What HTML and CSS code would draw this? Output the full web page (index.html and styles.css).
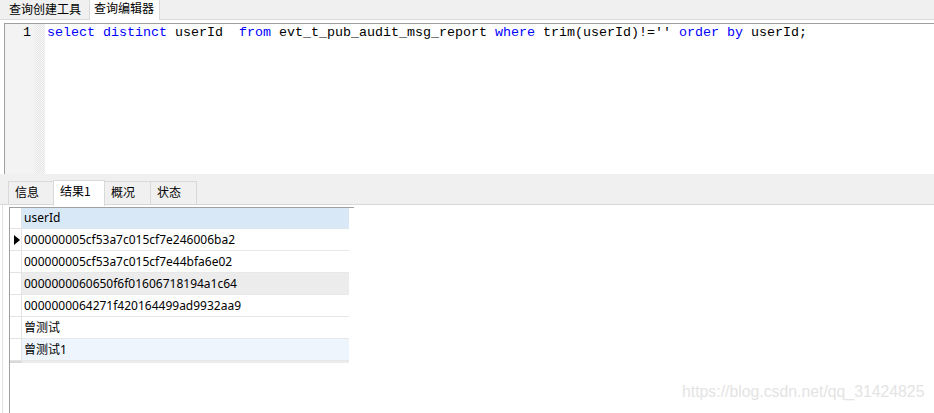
FILE: index.html
```html
<!DOCTYPE html>
<html>
<head>
<meta charset="utf-8">
<link rel="stylesheet" href="styles.css">
</head>
<body>
<div class="app">
  <div class="topbar">
    <div class="ttab">查询创建工具</div>
    <div class="ttab active">查询编辑器</div>
  </div>
  <div class="gap"></div>
  <div class="editor">
    <div class="gutter"><span class="lineno">1</span></div>
    <div class="fold"></div>
    <div class="code"><span class="kw">select</span> <span class="kw">distinct</span> userId  <span class="kw">from</span> evt_t_pub_audit_msg_report <span class="kw">where</span> trim(userId)!='' <span class="kw">order</span> <span class="kw">by</span> userId;</div>
  </div>
  <div class="midbar">
    <div class="rtab">信息</div>
    <div class="rtab active">结果1</div>
    <div class="rtab">概况</div>
    <div class="rtab">状态</div>
  </div>
  <div class="results">
    <div class="grid">
      <div class="row head"><div class="ind"></div><div class="cell">userId</div></div>
      <div class="row"><div class="ind"><span class="tri"></span></div><div class="cell">000000005cf53a7c015cf7e246006ba2</div></div>
      <div class="row"><div class="ind"></div><div class="cell">000000005cf53a7c015cf7e44bfa6e02</div></div>
      <div class="row gray"><div class="ind"></div><div class="cell">0000000060650f6f01606718194a1c64</div></div>
      <div class="row"><div class="ind"></div><div class="cell">0000000064271f420164499ad9932aa9</div></div>
      <div class="row"><div class="ind"></div><div class="cell">曾测试</div></div>
      <div class="row blue"><div class="ind"></div><div class="cell">曾测试1</div></div>
      <div class="row end"><div class="ind"></div><div class="cell"></div></div>
    </div>
    <div class="watermark">https://blog.csdn.net/qq_31424825</div>
  </div>
</div>
</body>
</html>
```
FILE: styles.css
```css
* { box-sizing: border-box; }
html, body { margin: 0; padding: 0; }
body {
  width: 934px;
  height: 413px;
  overflow: hidden;
  background: #fff;
  font-family: "Noto Sans", "Noto Sans CJK SC", sans-serif;
  font-size: 12px;
  color: #000;
}
.app { position: relative; width: 934px; height: 413px; }

.topbar {
  height: 20px;
  background: #f0f0f0;
  border-bottom: 1px solid #dadada;
  display: flex;
  align-items: flex-end;
}
.ttab {
  height: 19px;
  line-height: 18px;
  padding: 0 8px 0 9px;
  font-family: "Noto Sans CJK SC", sans-serif;
  font-size: 12px;
  color: #000;
}
.ttab.active {
  height: 20px;
  margin-bottom: -1px;
  background: #fff;
  border-left: 1px solid #dadada;
  border-right: 1px solid #dadada;
  padding: 0 5px 0 4px;
  line-height: 16px;
}
.gap { height: 3px; }

.editor {
  margin-left: 4px;
  height: 151px;
  border-top: 1px solid #a0a0a0;
  border-left: 1px solid #a0a0a0;
  display: flex;
}
.gutter {
  width: 30px;
  background: #f3f3f3;
  text-align: right;
  padding-right: 4px;
  padding-top: 1px;
}
.lineno {
  font-family: "Liberation Mono", monospace;
  font-size: 13.33px;
  line-height: 16px;
  display: block;
}
.fold {
  width: 10px;
  background-color: #f7f7f7;
  background-image:
    linear-gradient(45deg, #e6e6e6 25%, transparent 25%, transparent 75%, #e6e6e6 75%),
    linear-gradient(45deg, #e6e6e6 25%, transparent 25%, transparent 75%, #e6e6e6 75%);
  background-size: 2px 2px;
  background-position: 0 0, 1px 1px;
}
.code {
  padding-left: 2px;
  padding-top: 1px;
  font-family: "Liberation Mono", monospace;
  font-size: 13.33px;
  line-height: 16px;
  white-space: pre;
  color: #000;
}
.kw { color: #0000ff; }

.midbar {
  height: 31px;
  background: #f0f0f0;
  border-bottom: 1px solid #d8d8d8;
  display: flex;
  align-items: flex-end;
  padding-left: 8px;
}
.rtab {
  height: 23px;
  line-height: 20px;
  border: 1px solid #d9d9d9;
  border-bottom: none;
  margin-right: -1px;
  font-family: "Noto Sans CJK SC", sans-serif;
  font-size: 12px;
  padding: 0 6px;
}
.rtab:nth-child(1) { width: 46px; }
.rtab:nth-child(2) { width: 52px; }
.rtab:nth-child(3) { width: 47px; }
.rtab:nth-child(4) { width: 47px; }
.rtab.active {
  height: 26px;
  margin-bottom: -2px;
  background: #fff;
  line-height: 20px;
  position: relative;
  z-index: 1;
}

.results {
  height: 210px;
  padding-top: 2px;
  padding-left: 2px;
  border-left: 1px solid #e0e0e0;
  margin-left: 2px;
}
.grid {
  width: 345px;
  margin-left: 4px;
  border-top: 1px solid #a0a0a0;
  border-left: 1px solid #a0a0a0;
  height: 208px;
}
.row {
  display: flex;
  height: 22px;
}
.row.head { height: 21px; }
.ind {
  width: 12px;
  border-right: 1px solid #e3e3e3;
  border-bottom: 1px solid #e3e3e3;
  display: flex;
  align-items: center;
  justify-content: center;
}
.cell {
  width: 327px;
  border-bottom: 1px solid #e8e8e8;
  padding-left: 2px;
  line-height: 21px;
  font-family: "Noto Sans", "Noto Sans CJK SC", sans-serif;
  font-size: 12px;
  letter-spacing: 0;
  white-space: nowrap;
}
.row.head .cell { background: #d9e8f7; line-height: 20px; border-bottom-color: #e0e6ee; }
.row.gray .cell { background: #ececec; }
.row.blue .cell { background: #eef5fd; }
.row.end { height: 2px; }
.row.end .cell { border-bottom: 2px solid #ececec; }
.row.end .ind { border-bottom: 2px solid #d8d8d8; }
.tri {
  width: 0;
  height: 0;
  border-top: 5px solid transparent;
  border-bottom: 5px solid transparent;
  border-left: 6px solid #000;
  margin-left: 2px;
}

.watermark {
  position: absolute;
  left: 682px;
  top: 383px;
  font-family: "Liberation Sans", sans-serif;
  font-size: 15.8px;
  color: #e4e4e4;
}
```
